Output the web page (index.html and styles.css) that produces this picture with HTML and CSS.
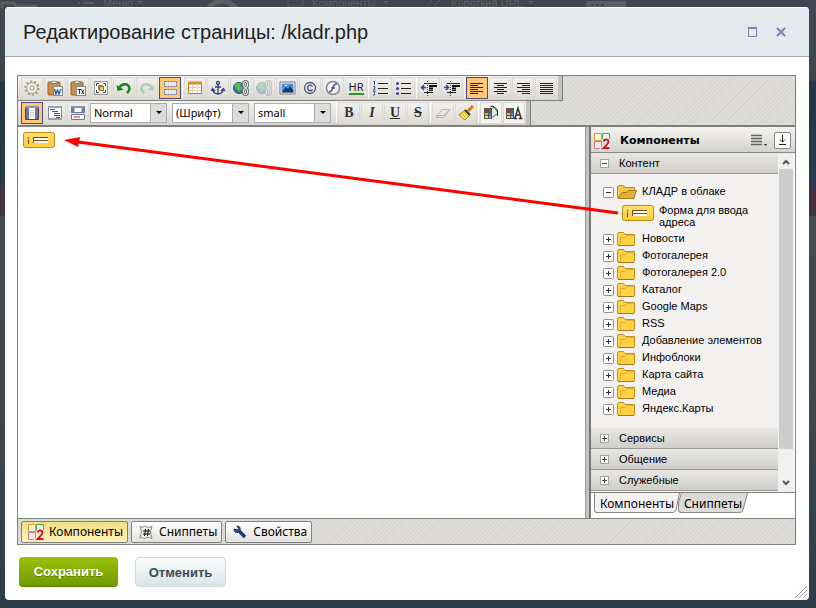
FILE: index.html
```html
<!DOCTYPE html>
<html lang="ru">
<head>
<meta charset="utf-8">
<title>Редактирование страницы</title>
<link rel="stylesheet" href="styles.css">
</head>
<body>
<svg class="defs" aria-hidden="true">
  <defs>
    <linearGradient id="gold" x1="0" y1="0" x2="0" y2="1"><stop offset="0" stop-color="#ffe06a"/><stop offset="1" stop-color="#f8cb3c"/></linearGradient>
    <symbol id="folder" viewBox="0 0 18 14"><path d="M.5 2.500Q.5.5 2 .5H6.500L8 2.500H17.500V12Q17.500 13.500 16 13.500H2Q.5 13.500.5 12Z" fill="#fdd343" stroke="#c08c1c"/><path d="M3.500 12.500V5.500H8.500L10 3.500H16.500" fill="none" stroke="#e3ae2e"/><path d="M1 13.500H17" stroke="#a9741a"/></symbol>
    <symbol id="folder-open" viewBox="0 0 20 14"><path d="M.5 12V2Q.5.5 2 .5H6.500L8 2.500H17.500V13H1Z" fill="#f3c948" stroke="#b98a24"/><path d="M1 13.500L5 7.500H10L11.500 5.500H19.500L16.500 13.500Z" fill="#e2b13a" stroke="#a9741a"/></symbol>
    <symbol id="form" viewBox="0 0 32 16"><rect x=".5" y=".5" width="31" height="15" rx="2" fill="url(#gold)" stroke="#b98b1c"/><path d="M5.500 5V6.500M5.500 7.500V12" stroke="#7a3b10"/><path d="M10.500 5V11M10 5.500H25M10 8.500H25M25 10.500H10" stroke="#8a4a16"/><path d="M11 7H25M11 10H25" stroke="#fff" stroke-width="2"/></symbol>
    <symbol id="logo" viewBox="0 0 16 16"><path d="M.5.5H7.500V7.500H.5Z" fill="#fff6d8" stroke="#d79a3a"/><path d="M8.500.5H15.500V7.500H8.500Z" fill="#f0f8ec" stroke="#4f9b52"/><path d="M.5 8.500H7.500V15.500H.5Z" fill="#f6e4e6" stroke="#b98088"/><path d="M9.500 8.500Q10 6.500 12 6.500Q14.500 6.500 14.500 8.800Q14.500 10.500 9.500 15H15.500" fill="none" stroke="#fff" stroke-width="4"/><path d="M9.500 8.500Q10 6.500 12 6.500Q14.500 6.500 14.500 8.800Q14.500 10.500 9.500 15H15.500" fill="none" stroke="#d0181c" stroke-width="2"/></symbol>
    <symbol id="paste" viewBox="0 0 16 16"><rect x="1" y="2" width="12" height="13" rx="1" fill="#c89242" stroke="#946120"/><path d="M4 3.500V1.500H6Q7-.5 8 1.500H10V3.500Z" fill="#e4e4e4" stroke="#666" stroke-width=".7"/><rect x="6.500" y="6.500" width="9" height="9" fill="#fff" stroke="#888"/></symbol>
    <symbol id="globe" viewBox="0 0 18 16"><circle cx="6" cy="8" r="5.500" fill="#3377c8" stroke="#205090"/><path d="M1 6L4 3L8 3L7 6L9 8L6 12L4 9Z" fill="#66bd37"/><g fill="none" stroke="#777" stroke-width="3"><rect x="10.500" y="1.500" width="4" height="6" rx="2"/><rect x="10.500" y="8.500" width="4" height="6" rx="2"/></g><g fill="none" stroke="#f4f4f4"><rect x="10.500" y="1.500" width="4" height="6" rx="2"/><rect x="10.500" y="8.500" width="4" height="6" rx="2"/></g></symbol>
    <symbol id="palette" viewBox="0 0 8 11"><path d="M0 0H8V11H0Z" fill="#555"/><path d="M1 1H4V4H1Z" fill="#e02020"/><path d="M5 1H7V4H5Z" fill="#228b22"/><path d="M1 5H4V7H1Z" fill="#ffb020"/><path d="M5 5H7V7H5Z" fill="#4090ff"/><path d="M1 8H4V10H1Z" fill="#ffe040"/><path d="M5 8H7V10H5Z" fill="#78b8ff"/></symbol>
    <symbol id="plus" viewBox="0 0 11 11"><rect x=".5" y=".5" width="10" height="10" rx="1" fill="#fff" stroke="#909090"/><path d="M3 5.500H8M5.500 3V8" stroke="#333"/></symbol>
    <symbol id="minus" viewBox="0 0 11 11"><rect x=".5" y=".5" width="10" height="10" rx="1" fill="#fff" stroke="#909090"/><path d="M3 5.500H8" stroke="#333"/></symbol>
    <symbol id="plus-s" viewBox="0 0 9 9"><rect x=".5" y=".5" width="8" height="8" fill="#fff" stroke="#a4a4a4"/><path d="M2 4.500H7M4.500 2V7" stroke="#444"/></symbol>
    <symbol id="minus-s" viewBox="0 0 9 9"><rect x=".5" y=".5" width="8" height="8" fill="#fff" stroke="#a4a4a4"/><path d="M2 4.500H7" stroke="#444"/></symbol>
  </defs>
</svg>
<div class="backdrop" aria-hidden="true">
  <svg width="640" height="8"><g fill="none" stroke="#5a5d65"><path d="M2 8V3H14L16 6H36V8" stroke-width="3"/><path d="M78 3H80M83 3H94" stroke-width="2"/><path d="M208 8Q222-6 236 8" stroke-width="5"/><path d="M288 0V6H303V0M427 6L432 0M434 6L440 0"/></g><path d="M586 2Q586 1 588 1H626V8H586Z" fill="#5a5d65"/><path d="M591 4H594V6H591ZM596 4H599V6H596ZM601 4H604V6H601Z" fill="#42454f"/><path d="M137 1H143L140 4ZM383 1H389L386 4ZM528 1H534L531 4Z" fill="#5a5d65"/></svg>
  <span class="ghost ghost-menu">Меню</span><span class="ghost ghost-comp">Компоненты</span><span class="ghost ghost-url">Короткий URL</span>
  <div class="band"></div>
</div>
<main class="dialog">
  <header class="title-bar">
    <h1>Редактирование страницы: /kladr.php</h1>
    <div class="window-buttons">
      <button aria-label="Развернуть"><svg width="10" height="10"><path d="M.5 1V9.500H8.500V1" fill="none" stroke="#7286a6"/><path d="M0 1H9" stroke="#7286a6" stroke-width="2"/></svg></button>
      <button aria-label="Закрыть"><svg width="10" height="10"><path d="M1 1L9 9M9 1L1 9" stroke="#7286a6" stroke-width="2.200"/></svg></button>
    </div>
  </header>
  <section class="editor">
    <div class="toolbars">
      <div class="toolbar" role="toolbar" aria-label="Вставка">
        <button aria-label="Настройки"><svg viewBox="0 0 18 18"><circle cx="9" cy="9" r="6.500" fill="none" stroke="#9a9884" stroke-width="2" stroke-dasharray="2 2"/><circle cx="9" cy="9" r="5.500" fill="#eeecd0" stroke="#a9a792"/><circle cx="9" cy="9" r="2" fill="#fff" stroke="#9a9884"/></svg></button>
        <button aria-label="Вставить из Word"><svg viewBox="0 0 18 18"><use href="#paste" x="1" y="1" width="16" height="16"/><path d="M8.500 10L10 15L11.500 11L13 15L15 10" fill="none" stroke="#164fa8" stroke-width="1.300"/></svg></button>
        <button aria-label="Вставить как текст"><svg viewBox="0 0 18 18"><use href="#paste" x="1" y="1" width="16" height="16"/><path d="M8.500 10.500H12M10.500 10.500V15M12.500 10.500L15 15M15 10.500L12.500 15" stroke="#333"/></svg></button>
        <button aria-label="Выделить всё"><svg viewBox="0 0 18 18"><rect x="2.500" y="2.500" width="13" height="13" fill="#fff" stroke="#999"/><path d="M4.500 7V4.500H7M11 4.500H13.500V7M13.500 11V13.500H11M7 13.500H4.500V11" fill="none" stroke="#444"/><path d="M6.500 6.500H10.500V10.500H6.500Z" fill="#eee" stroke="#777"/><path d="M7.500 7.500H11.500V11.500H7.500Z" fill="#f9c963" stroke="#9a6818"/></svg></button>
        <button aria-label="Отменить действие"><svg viewBox="0 0 18 18"><path d="M4 9Q7 4 12 5.500Q17 9 12 14" fill="none" stroke="#12861a" stroke-width="2.500"/><path d="M1.500 6L2.500 12L8.500 10.500Z" fill="#12861a"/></svg></button>
        <button aria-label="Повторить" class="faded"><svg viewBox="0 0 18 18"><path d="M14 9Q11 4 6 5.500Q1 9 6 14" fill="none" stroke="#4ba069" stroke-width="2.500"/><path d="M16.500 6L15.500 12L9.500 10.500Z" fill="#4ba069"/></svg></button>
        <button aria-label="Границы" class="active"><svg viewBox="0 0 18 18"><path d="M3.500 2.500H15.500V7.500H3.500ZM3.500 10.500H15.500V15.500H3.500Z" fill="#e1e6ef" stroke="#64779a" stroke-dasharray="2 1"/></svg></button>
        <i class="sep"></i>
        <button aria-label="Таблица"><svg viewBox="0 0 18 18"><path d="M2.500 3.500H15.500V14.500H2.500Z" fill="#fff" stroke="#b9771c"/><path d="M2 4H16" stroke="#d78e28" stroke-width="3"/><path d="M3 8.500H15M3 11.500H15M6.500 6V14M11.500 6V14" stroke="#e7d1aa"/></svg></button>
        <button aria-label="Якорь"><svg viewBox="0 0 18 18"><g fill="none" stroke="#2c4184" stroke-width="1.300"><circle cx="9" cy="4" r="1.500"/><path d="M9 6V15M6 8H12M3.500 10Q4 14.500 9 15Q14 14.500 14.500 10M2.500 12L3.500 9.500L6 12M12 12L14.500 9.500L16 12"/></g></svg></button>
        <button aria-label="Ссылка"><svg viewBox="0 0 18 18"><use href="#globe" x="1" y="1" width="18" height="16"/></svg></button>
        <button aria-label="Удалить ссылку" class="faded"><svg viewBox="0 0 18 18"><use href="#globe" x="1" y="1" width="18" height="16"/></svg></button>
        <button aria-label="Изображение"><svg viewBox="0 0 18 18"><path d="M2 3H17V15H2Z" fill="#fff" stroke="#777"/><path d="M3.500 4.500H15.500V13.500H3.500Z" fill="#4c90dc"/><path d="M4 13L8 8L10 10L12 7L15.500 12V13.500H4Z" fill="#163763"/><path d="M7 6H9V7H7Z" fill="#fff"/></svg></button>
        <button aria-label="Символ"><svg viewBox="0 0 18 18"><circle cx="9" cy="9" r="5.500" fill="none" stroke="#47538b" stroke-width="1.300"/><path d="M11.500 7.500Q9 4.500 7 7.500Q6 11 9 11.800Q10.500 12 11.500 10.500" fill="none" stroke="#47538b" stroke-width="1.400"/></svg></button>
        <button aria-label="Flash"><svg viewBox="0 0 18 18"><circle cx="9" cy="9" r="6.500" fill="#f8f8f8" stroke="#84889a" stroke-width="1.500"/><path d="M13 5Q10 4.500 9 8Q8 12.500 5 13M7.500 9H11" fill="none" stroke="#4c5894" stroke-width="1.500"/></svg></button>
        <button aria-label="Линия" class="hr-button"><span>HR</span></button>
        <i class="sep"></i>
        <button aria-label="Нумерованный список"><svg viewBox="0 0 18 18"><path d="M6 4.500H16M6 9.500H16M6 14.500H16" stroke="#222"/><path d="M1.500 3L2.500 2V6M1 7.500H3V9L1 11H3.500M1 12.500H3L2 14L3 15.500L1 16.500" fill="none" stroke="#3d4c92"/></svg></button>
        <button aria-label="Маркированный список"><svg viewBox="0 0 18 18"><path d="M6 4.500H16M6 9.500H16M6 14.500H16" stroke="#222"/><circle cx="2.500" cy="4.500" r="1.500" fill="#3644a0"/><circle cx="2.500" cy="9.500" r="1.500" fill="#3644a0"/><circle cx="2.500" cy="14.500" r="1.500" fill="#3644a0"/></svg></button>
        <i class="sep"></i>
        <button aria-label="Уменьшить отступ"><svg viewBox="0 0 18 18"><path d="M4 4.500H17M9 11.500H13M4 13.500H13" stroke="#222"/><path d="M9 7H17M9 9.500H13" stroke="#111" stroke-width="2"/><path d="M7.500 2V17" stroke="#444" stroke-dasharray="1 1"/><path d="M1 8.500H6M4 6L1.500 8.500L4 11" fill="none" stroke="#3240a0" stroke-width="1.500"/></svg></button>
        <button aria-label="Увеличить отступ"><svg viewBox="0 0 18 18"><path d="M4 4.500H17M9 11.500H13M4 13.500H13" stroke="#222"/><path d="M9 7H17M9 9.500H13" stroke="#111" stroke-width="2"/><path d="M7.500 2V17" stroke="#444" stroke-dasharray="1 1"/><path d="M1 8.500H6M3 6L5.500 8.500L3 11" fill="none" stroke="#3240a0" stroke-width="1.500"/></svg></button>
        <i class="sep"></i>
        <button aria-label="По левому краю" class="active"><svg viewBox="0 0 18 18"><path d="M2 4.500H15M2 6.500H10M2 8.500H15M2 10.500H10M2 12.500H15M2 14.500H10" stroke="#222"/></svg></button>
        <button aria-label="По центру"><svg viewBox="0 0 18 18"><path d="M3 4.500H16M6 6.500H13M3 8.500H16M6 10.500H13M3 12.500H16M6 14.500H13" stroke="#222"/></svg></button>
        <button aria-label="По правому краю"><svg viewBox="0 0 18 18"><path d="M3 4.500H16M8 6.500H16M3 8.500H16M8 10.500H16M3 12.500H16M8 14.500H16" stroke="#222"/></svg></button>
        <button aria-label="По ширине"><svg viewBox="0 0 18 18"><path d="M3 4.500H16M3 6.500H16M3 8.500H16M3 10.500H16M3 12.500H16M3 14.500H16" stroke="#222"/></svg></button>
        <i class="grip"></i>
      </div>
      <div class="toolbar" role="toolbar" aria-label="Форматирование">
        <button aria-label="Визуальный режим" class="active"><svg viewBox="0 0 18 18"><path d="M2.500 2.500H15.500V15.500H2.500Z" fill="#6c779c" stroke="#3b4674"/><path d="M6 4H12V15H6Z" fill="#fff"/><path d="M7 6.500H11M7 8.500H11M7 10.500H11M7 12.500H11" stroke="#ccc"/><path d="M2 3H16" stroke="#8d94b3" stroke-width="2"/></svg></button>
        <button aria-label="Режим кода"><svg viewBox="0 0 18 18"><path d="M2.500 2.500H15.500V15.500H2.500Z" fill="#fff" stroke="#8088a5"/><path d="M2 3H16M2 15H16" stroke="#9a9fba" stroke-width="2"/><path d="M4 5.500H9M6 7.500H12M8 9.500H14M8 11.500H14M10 13.500H14" stroke="#e01020"/></svg></button>
        <button aria-label="Совмещённый режим"><svg viewBox="0 0 18 18"><path d="M2.500 2.500H15.500V8.500H2.500ZM2.500 10.500H15.500V15.500H2.500Z" fill="#fff" stroke="#6c769d"/><path d="M2 3H16" stroke="#8b92b2" stroke-width="2"/><path d="M4 4V8M14 4V8" stroke="#707ba1" stroke-width="3"/><path d="M5 13H11" stroke="#e01020"/></svg></button>
        <label class="pick"><select aria-label="Стиль"><option>Normal</option></select></label>
        <label class="pick"><select aria-label="Шрифт"><option>(Шрифт)</option></select></label>
        <label class="pick"><select aria-label="Размер"><option>small</option></select></label>
        <i class="sep"></i>
        <button class="letter"><b>B</b></button>
        <button class="letter"><em>I</em></button>
        <button class="letter"><u>U</u></button>
        <button class="letter"><s>S</s></button>
        <i class="sep"></i>
        <button aria-label="Ластик"><svg viewBox="0 0 18 18"><path d="M2 13.500L8 5.500H16L10 13.500ZM2 11.500H10L16 5" fill="none" stroke="#b9b7b0"/></svg></button>
        <button aria-label="Кисть"><svg viewBox="0 0 18 18"><path d="M11 7L16 2" stroke="#ca7d1c" stroke-width="3"/><path d="M2 11L8 6L13 11L8 16Z" fill="#f5c928" stroke="#b48512"/><path d="M8 6L13 11" stroke="#333" stroke-width="2"/><path d="M4 11L8 15M6 9L10 13" stroke="#fff184"/></svg></button>
        <i class="sep"></i>
        <button aria-label="Цвет фона" class="light"><svg viewBox="0 0 18 18"><path d="M8 6L12 3L16 9L11 13L8 12Z" fill="#e8e8e8" stroke="#666"/><path d="M8 3L11 2L15.500 6V12" fill="none" stroke="#333"/><use href="#palette" x="2" y="4" width="8" height="11"/></svg></button>
        <button aria-label="Цвет текста" class="light"><svg viewBox="0 0 18 18"><use href="#palette" x="1" y="4" width="8" height="11"/><path d="M9 14.500H12M13.500 14.500H17.500M10 14L13 4L16 14M11 11H15" fill="none" stroke="#333" stroke-width="1.500"/></svg></button>
        <i class="grip"></i>
      </div>
    </div>
    <div class="work">
      <div class="canvas"><svg width="32" height="16"><use href="#form"/></svg></div>
      <div class="splitter"></div>
      <aside class="panel">
        <div class="panel-head">
          <svg width="16" height="16"><use href="#logo"/></svg>
          <h2>Компоненты</h2>
          <button class="menu-button" aria-label="Меню"><svg width="17" height="13"><path d="M0 1.500H11M0 4.500H11M0 7.500H11M0 10.500H11" stroke="#666" stroke-width="1.500"/><path d="M13 10H16L14.500 12Z" fill="#222"/></svg></button>
          <button class="dock" aria-label="Свернуть"><svg width="9" height="11"><path d="M4.500 0V7M2 4.500L4.500 7L7 4.500M1 9.500H8" fill="none" stroke="#222"/></svg></button>
        </div>
        <div class="panel-body">
          <div class="groups">
            <button class="group"><svg width="9" height="9"><use href="#minus-s"/></svg>Контент</button>
            <ul class="tree">
              <li><svg width="11" height="11"><use href="#minus"/></svg><svg width="20" height="14"><use href="#folder-open"/></svg><span>КЛАДР в облаке</span></li>
              <li class="leaf"><svg width="32" height="16"><use href="#form"/></svg><span>Форма для ввода адреса</span></li>
              <li><svg width="11" height="11"><use href="#plus"/></svg><svg width="20" height="14"><use href="#folder" width="18" height="14"/></svg><span>Новости</span></li>
              <li><svg width="11" height="11"><use href="#plus"/></svg><svg width="20" height="14"><use href="#folder" width="18" height="14"/></svg><span>Фотогалерея</span></li>
              <li><svg width="11" height="11"><use href="#plus"/></svg><svg width="20" height="14"><use href="#folder" width="18" height="14"/></svg><span>Фотогалерея 2.0</span></li>
              <li><svg width="11" height="11"><use href="#plus"/></svg><svg width="20" height="14"><use href="#folder" width="18" height="14"/></svg><span>Каталог</span></li>
              <li><svg width="11" height="11"><use href="#plus"/></svg><svg width="20" height="14"><use href="#folder" width="18" height="14"/></svg><span>Google Maps</span></li>
              <li><svg width="11" height="11"><use href="#plus"/></svg><svg width="20" height="14"><use href="#folder" width="18" height="14"/></svg><span>RSS</span></li>
              <li><svg width="11" height="11"><use href="#plus"/></svg><svg width="20" height="14"><use href="#folder" width="18" height="14"/></svg><span>Добавление элементов</span></li>
              <li><svg width="11" height="11"><use href="#plus"/></svg><svg width="20" height="14"><use href="#folder" width="18" height="14"/></svg><span>Инфоблоки</span></li>
              <li><svg width="11" height="11"><use href="#plus"/></svg><svg width="20" height="14"><use href="#folder" width="18" height="14"/></svg><span>Карта сайта</span></li>
              <li><svg width="11" height="11"><use href="#plus"/></svg><svg width="20" height="14"><use href="#folder" width="18" height="14"/></svg><span>Медиа</span></li>
              <li><svg width="11" height="11"><use href="#plus"/></svg><svg width="20" height="14"><use href="#folder" width="18" height="14"/></svg><span>Яндекс.Карты</span></li>
            </ul>
            <button class="group"><svg width="9" height="9"><use href="#plus-s"/></svg>Сервисы</button>
            <button class="group"><svg width="9" height="9"><use href="#plus-s"/></svg>Общение</button>
            <button class="group"><svg width="9" height="9"><use href="#plus-s"/></svg>Служебные</button>
          </div>
          <div class="scroll" aria-hidden="true">
            <svg width="8" height="6"><path d="M1 5L4 2L7 5" fill="none" stroke="#555" stroke-width="2"/></svg>
            <div class="track"><div class="thumb"></div></div>
            <svg width="8" height="6"><path d="M1 1L4 4L7 1" fill="none" stroke="#555" stroke-width="2"/></svg>
          </div>
        </div>
        <div class="tabs">
          <button class="tab"><svg viewBox="0 0 86 19" preserveAspectRatio="none"><path d="M.5 0V16Q.5 18.500 3 18.500H79Q81 18.500 82 16L85.500 0" fill="#f3f2f0" stroke="#888"/></svg><span>Компоненты</span></button>
          <button class="tab tab-off"><svg viewBox="0 0 70 19" preserveAspectRatio="none"><path d="M3.500 0L.5 9V16Q.5 18.500 3 18.500H62Q64 18.500 65 16L69.500 0" fill="#dddbd6" stroke="#888"/></svg><span>Сниппеты</span></button>
        </div>
      </aside>
    </div>
    <div class="taskbar">
      <button class="task pressed"><svg width="16" height="16"><use href="#logo"/></svg>Компоненты</button>
      <button class="task"><svg width="16" height="16"><path d="M2 2L4 3.500L7 2L10 3.500L14 2.500L12.500 8L14 14.500L10 13L7 14.500L2 13.500L3.500 8Z" fill="#efeee5" stroke="#8f8e80"/><path d="M7.500 5L6.500 12M10.500 5L9.500 12M5 7H12M5 10H12" stroke="#111"/></svg>Сниппеты</button>
      <button class="task"><svg width="16" height="16"><path d="M6 6L13 13" stroke="#203a72" stroke-width="3.500"/><path d="M2 5Q2 9 6 8.500Q9 7 8 3.500Q7 2 5 2L6.500 4.500L5 6Z" fill="#2d4c8c" stroke="#203a72"/></svg>Свойства</button>
    </div>
    <svg class="arrow" viewBox="0 0 556 76" aria-hidden="true"><path d="M14 3L554 74" stroke="#f00" stroke-width="3"/><path d="M0 1L16 -2L14 8Z" fill="#f00"/></svg>
  </section>
  <footer class="actions">
    <button class="save">Сохранить</button>
    <button class="cancel">Отменить</button>
    <svg class="resize" width="12" height="12" aria-hidden="true"><path d="M0 12L12 0M4 12L12 4M8 12L12 8" stroke="#999"/></svg>
  </footer>
</main>
</body>
</html>
```
FILE: styles.css
```css
* { box-sizing: border-box; }
body {
  margin: 0;
  min-height: 100vh;
  padding: 7px 7px 8px 5px;
  display: flex;
  background: linear-gradient(#42454f 0, #3b4651 81px, #26364a 82px, #2b3b49 188px, #3f4c55 216px, #3c4953 400px, #2d3c48 100%);
  font-family: "Liberation Sans", Arial, sans-serif;
  font-size: 11px;
  color: #000;
}
button, select { font: inherit; color: inherit; padding: 0; margin: 0; border: 0; background: none; }
svg { display: block; flex: none; }
.defs { position: absolute; width: 0; height: 0; }

.backdrop { position: absolute; inset: 0; overflow: hidden; }
.ghost { position: absolute; top: 0; font-size: 11px; line-height: 7px; color: #5d6068; }
.ghost-menu { left: 103px; }
.ghost-comp { left: 312px; }
.ghost-url { left: 451px; }
.band { position: absolute; left: 0; right: 0; top: 189px; height: 27px; background: #47313f; }

.dialog {
  position: relative;
  flex: 1;
  min-width: 0;
  display: flex;
  flex-direction: column;
  background: #fff;
  border-radius: 4px;
  overflow: hidden;
}
.title-bar {
  display: flex;
  align-items: center;
  justify-content: space-between;
  height: 50px;
  padding: 0 23px 0 18px;
  background: #e2eaed;
  border-top: 1px solid #fff;
  border-bottom: 1px solid #9fa3a5;
}
h1 { margin: 0; font-size: 20px; line-height: 24px; font-weight: 400; color: #222; }
.window-buttons { display: flex; gap: 18px; }

.editor {
  position: relative;
  flex: 1;
  display: flex;
  flex-direction: column;
  margin: 18px 13px 0 12px;
  border: 1px solid #808080;
}
.toolbars, .taskbar { background: repeating-linear-gradient(135deg, #dfddd9 0, #dfddd9 2px, #d6d4cf 2px, #d6d4cf 3px); }
.toolbars { border-bottom: 2px solid #808080; }
.toolbar {
  display: flex;
  align-items: center;
  gap: 1px;
  width: max-content;
  height: 25px;
  padding-left: 3px;
  background: linear-gradient(#f6f5f3, #d8d5cf);
  border-bottom: 1px solid #808080;
  border-right: 1px solid #808080;
}
.toolbar + .toolbar { height: 24px; border-bottom: 0; }
.toolbar button {
  width: 22px;
  height: 22px;
  display: flex;
  align-items: center;
  justify-content: center;
  border: 1px solid #dcdad5;
  background: linear-gradient(#f1f0ed, #dedbd5);
}
.toolbar button svg { width: 18px; height: 18px; }
.toolbar .active { background: #ffc673; border: 1px solid #4b4b74; }
.toolbar .faded svg { opacity: .35; }
.toolbar .light { background: #f4f4f4; }
.toolbar .hr-button span { font: 11px/12px "Noto Sans", sans-serif; color: #222; border-bottom: 2px solid #1f9a1f; }
.toolbar .letter { font: bold 14px/16px "Liberation Serif", serif; color: #333; }
.sep { width: 1px; height: 20px; background: #fff; }
.grip { width: 4px; align-self: stretch; background: #c4c2bd; }
.pick { position: relative; margin-right: 4px; display: block; }
.pick select {
  display: block;
  appearance: none;
  width: 77px;
  height: 20px;
  padding: 0 18px 0 3px;
  border: 1px solid #a8acb4;
  border-radius: 0;
  background: #fff;
  font: 11px/16px "Noto Sans", Tahoma, sans-serif;
}
.pick::before { content: ""; position: absolute; right: 1px; top: 1px; width: 15px; height: 18px; background: #dedcd8; border-left: 1px solid #a8acb4; }
.pick::after { content: ""; position: absolute; right: 5px; top: 8px; border: 3px solid transparent; border-top-color: #000; border-bottom: 0; }

.work { flex: 1; display: flex; }
.canvas { flex: 1; padding: 5px; background: #fff; }
.splitter { width: 6px; background: #c6c4c0; border-left: 1px solid #999; border-right: 2px solid #777; }
.panel { width: 204px; display: flex; flex-direction: column; }
.panel-head {
  display: flex;
  align-items: center;
  height: 26px;
  padding: 2px 4px 0 3px;
  background: linear-gradient(#f5f4f2, #d4d2cc);
  border-bottom: 1px solid #888;
}
h2 { flex: 1; margin: 0 0 0 10px; font: bold 11px/14px "DejaVu Sans", Verdana, sans-serif; }
.menu-button { margin-right: 6px; }
.dock { width: 17px; height: 17px; display: flex; align-items: center; justify-content: center; background: #fff; border: 1px solid #888; border-radius: 2px; }
.panel-body { flex: 1; display: flex; border-bottom: 1px solid #808080; }
.groups { flex: 1; display: flex; flex-direction: column; padding-bottom: 1px; background: #f3f2f1; }
.group {
  display: flex;
  align-items: center;
  gap: 10px;
  height: 21px;
  padding-left: 9px;
  background: linear-gradient(#e8e7e4, #d0cec9);
  border-bottom: 1px solid #999;
}
.tree { flex: 1; list-style: none; margin: 0; padding: 9px 0 0 12px; }
.tree li { display: flex; align-items: center; height: 17px; line-height: 12px; }
.tree li svg + svg { margin: 1px 5px 0 3px; }
.tree li > svg:first-child { margin-top: 2px; }
.tree span { padding-bottom: 2px; }
.tree .leaf { height: 30px; padding-left: 19px; align-items: flex-start; padding-top: 4px; }
.leaf span { width: 110px; margin-left: 5px; }
.tree .leaf > svg:first-child { margin-top: 1px; }
.scroll { width: 17px; display: flex; flex-direction: column; align-items: center; padding: 6px 0; background: #f0f0f0; border-right: 1px solid #fff; }
.track { flex: 1; align-self: stretch; padding: 4px 1px 0; }
.thumb { height: 280px; background: #cdcdcd; }
.tabs { display: flex; height: 25px; padding-left: 3px; background: #fff; }
.tab { position: relative; width: 86px; height: 20px; font: 12px/22px "Noto Sans", Tahoma, sans-serif; }
.tab svg { position: absolute; inset: 0; width: 100%; height: 100%; }
.tab span { position: relative; }
.tab-off { width: 70px; margin-left: -2px; }

.taskbar { display: flex; align-items: center; gap: 3px; height: 26px; padding-left: 3px; border-top: 1px solid #808080; }
.task {
  display: flex;
  align-items: center;
  gap: 5px;
  height: 22px;
  padding: 0 4px 0 6px;
  border: 1px solid #808080;
  border-radius: 2px;
  background: linear-gradient(#fff, #e2e1de);
  font: 12px/16px "Noto Sans", Tahoma, sans-serif;
}
.pressed { background: linear-gradient(#f3dd85, #fff3b8); }
.arrow { position: absolute; left: 46px; top: 63px; width: 556px; height: 76px; overflow: visible; }

.actions { display: flex; gap: 17px; padding: 12px 14px 13px; }
.actions button { height: 30px; border-radius: 4px; font-size: 13px; font-weight: 700; }
.actions .save { width: 99px; color: #fff; background: linear-gradient(#9bc107, #6f9b00); border-bottom: 1px solid #5c8200; text-shadow: 0 1px 0 #5a8000; }
.actions .cancel { width: 91px; color: #3f4b54; background: linear-gradient(#fbfcfc, #d9e3e6); border: 1px solid #d0d9dd; }
.resize { position: absolute; right: 2px; bottom: 2px; }
```
